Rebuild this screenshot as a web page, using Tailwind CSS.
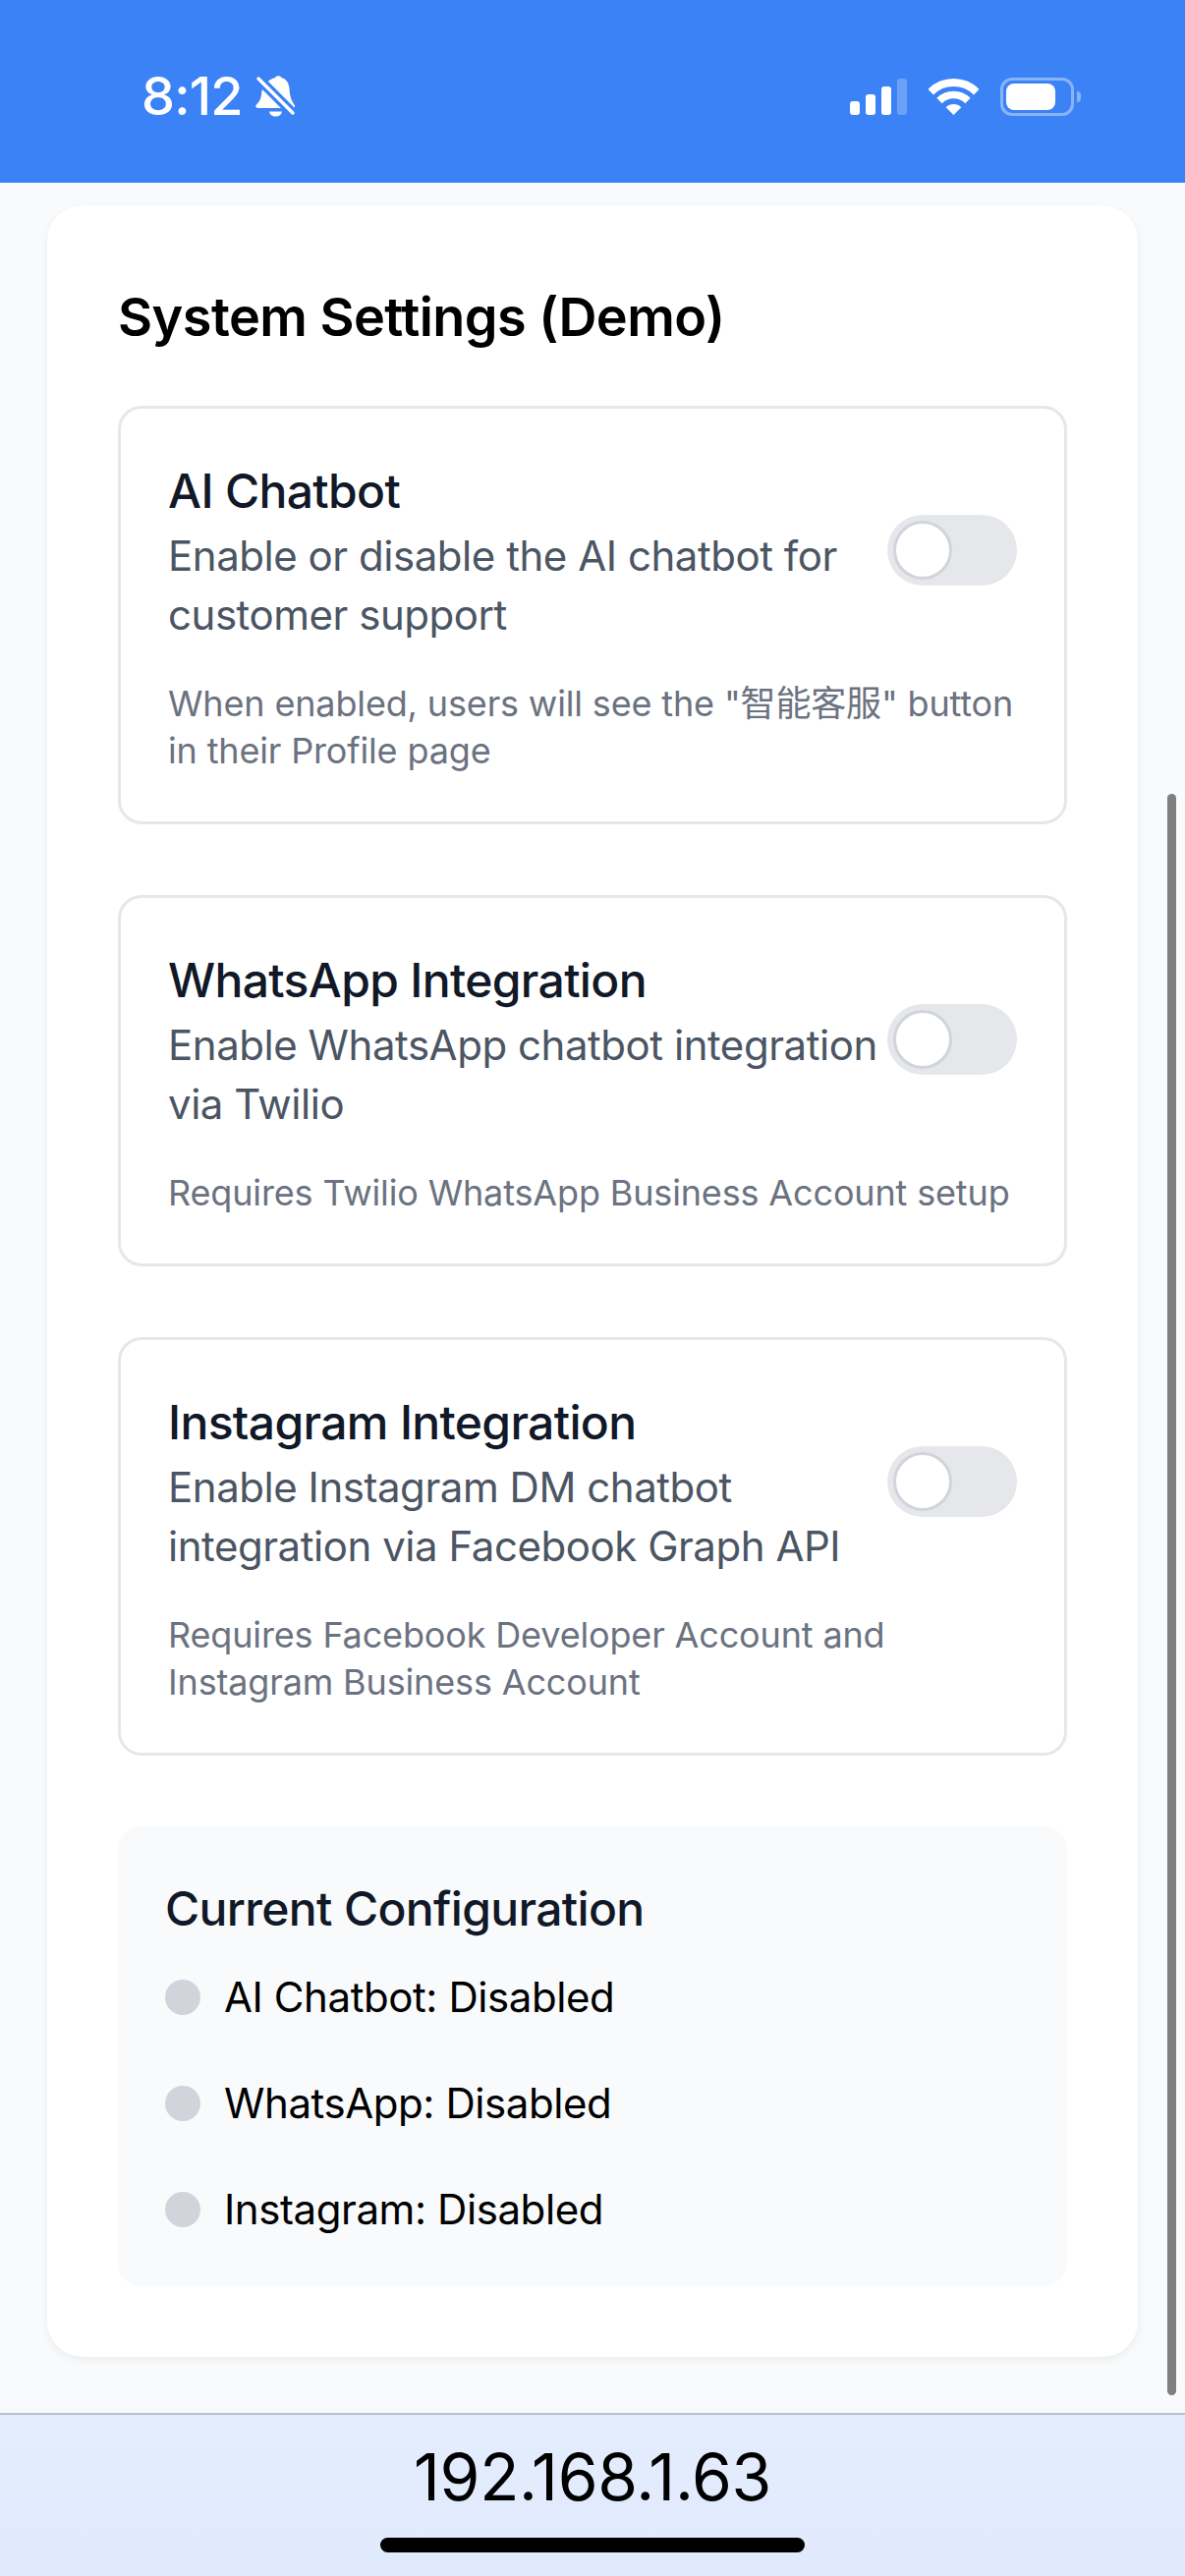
<!DOCTYPE html>
<html lang="en">
<head>
    <meta charset="UTF-8">
    <meta name="viewport" content="width=device-width, initial-scale=1.0">
    <title>System Settings (Demo)</title>
    <script src="https://cdn.jsdelivr.net/npm/@tailwindcss/browser@4"></script>
</head>
<body class="bg-[#f9fafb] font-['Inter','Noto_Sans_CJK_SC',sans-serif]">
    <div class="relative flex flex-col w-[1206px] h-[2622px] overflow-hidden">
        <!-- Status bar -->
        <header class="h-[186px] shrink-0 bg-[#3b82f6] text-white flex items-start pt-[78px] pl-[144px] pr-[106px]">
            <div class="flex items-center h-[40px]">
                <span class="text-[54px] leading-[40px] font-medium tracking-[-0.8px]">8:12</span>
                <svg class="ml-[13px]" width="41" height="42" viewBox="0 0 41 42">
                    <path fill="#fff" d="M20 2c1.500-2.500 5-2.500 6.500 0 5 1.500 7.500 5.500 8 11 .3 6 1.500 12 5 16.500 1 2 .5 3.500-2 3.500H3c-2.500 0-3.500-2-2-3.500 3-3 4.500-6 5-10C6.500 11 12 4 20 2z"/>
                    <path fill="#fff" d="M14 36.500h13c-.5 3-3 5-6.500 5s-6-2-6.500-5z"/>
                    <path stroke="#3b82f6" stroke-width="10" d="M-1 -1L42 42"/>
                    <path stroke="#fff" stroke-width="3.500" stroke-linecap="round" d="M3 3L38 38"/>
                </svg>
            </div>
            <div class="ml-auto flex items-center h-[40px]">
                <div class="flex items-end gap-[6px] h-[37px]">
                    <div class="w-[10px] h-[14px] rounded-[3px] bg-white"></div>
                    <div class="w-[10px] h-[21px] rounded-[3px] bg-white"></div>
                    <div class="w-[10px] h-[29px] rounded-[3px] bg-white"></div>
                    <div class="w-[10px] h-[37px] rounded-[3px] bg-white/25"></div>
                </div>
                <svg class="ml-[22px]" width="51" height="37" viewBox="0 0 51 37" fill="none">
                    <path stroke="#fff" stroke-width="8" d="M2.200 13.700A33 33 0 0 1 48.800 13.700"/>
                    <path stroke="#fff" stroke-width="7.500" d="M11 22.500A20.500 20.500 0 0 1 40 22.500"/>
                    <path fill="#fff" d="M25.500 37L17.700 29.200A11 11 0 0 1 33.300 29.200Z"/>
                </svg>
                <div class="ml-[22px] w-[75px] h-[39px] rounded-[12px] border-[3px] border-white/40 p-[3px]">
                    <div class="w-[50px] h-full rounded-[8px] bg-white"></div>
                </div>
                <div class="ml-[3px] w-[4px] h-[11px] rounded-r-full bg-white/40"></div>
            </div>
        </header>

        <!-- Page content -->
        <main class="flex-1 px-[48px] pt-[23px]">
            <div class="bg-white rounded-[36px] shadow-[0_3px_9px_rgba(0,0,0,0.06)] p-[72px]">
                <h1 class="text-[54px] leading-[84px] font-semibold text-black tracking-[-0.55px] mb-[48px]">System Settings (Demo)</h1>

                <!-- AI Chatbot -->
                <section class="border-[3px] border-[#e5e7eb] rounded-[24px] p-[48px] mb-[72px]">
                    <div class="flex items-center justify-between">
                        <div class="flex-1">
                            <h2 class="text-[48px] leading-[72px] font-[450] tracking-[-0.65px] text-[#111827]">AI Chatbot</h2>
                            <p class="text-[42px] leading-[60px] tracking-[-0.46px] text-[#4b5563]">Enable or disable the AI chatbot for customer support</p>
                        </div>
                        <div class="w-[132px] h-[72px] shrink-0 rounded-full bg-[#e5e7eb] flex items-center px-[6px]">
                            <div class="w-[60px] h-[60px] rounded-full bg-white border-[3px] border-[#d1d5db]"></div>
                        </div>
                    </div>
                    <p class="mt-[36px] text-[36px] leading-[48px] tracking-[-0.15px] text-[#6b7280]">When enabled, users will see the "智能客服" button in their Profile page</p>
                </section>

                <!-- WhatsApp -->
                <section class="border-[3px] border-[#e5e7eb] rounded-[24px] p-[48px] mb-[72px]">
                    <div class="flex items-center justify-between">
                        <div class="flex-1">
                            <h2 class="text-[48px] leading-[72px] font-[450] tracking-[-0.65px] text-[#111827]">WhatsApp Integration</h2>
                            <p class="text-[42px] leading-[60px] tracking-[-0.46px] text-[#4b5563]">Enable WhatsApp chatbot integration via Twilio</p>
                        </div>
                        <div class="w-[132px] h-[72px] shrink-0 rounded-full bg-[#e5e7eb] flex items-center px-[6px]">
                            <div class="w-[60px] h-[60px] rounded-full bg-white border-[3px] border-[#d1d5db]"></div>
                        </div>
                    </div>
                    <p class="mt-[36px] text-[36px] leading-[48px] tracking-[-0.15px] text-[#6b7280]">Requires Twilio WhatsApp Business Account setup</p>
                </section>

                <!-- Instagram -->
                <section class="border-[3px] border-[#e5e7eb] rounded-[24px] p-[48px] mb-[72px]">
                    <div class="flex items-center justify-between">
                        <div class="flex-1">
                            <h2 class="text-[48px] leading-[72px] font-[450] tracking-[-0.65px] text-[#111827]">Instagram Integration</h2>
                            <p class="text-[42px] leading-[60px] tracking-[-0.46px] text-[#4b5563]">Enable Instagram DM chatbot integration via Facebook Graph API</p>
                        </div>
                        <div class="w-[132px] h-[72px] shrink-0 rounded-full bg-[#e5e7eb] flex items-center px-[6px]">
                            <div class="w-[60px] h-[60px] rounded-full bg-white border-[3px] border-[#d1d5db]"></div>
                        </div>
                    </div>
                    <p class="mt-[36px] pr-[100px] text-[36px] leading-[48px] tracking-[-0.15px] text-[#6b7280]">Requires Facebook Developer Account and Instagram Business Account</p>
                </section>

                <!-- Current config -->
                <section class="bg-[#f9fafb] rounded-[24px] p-[48px]">
                    <h3 class="text-[48px] leading-[72px] font-[450] tracking-[-0.65px] text-[#111827] mb-[24px]">Current Configuration</h3>
                    <div class="flex flex-col gap-[48px]">
                        <div class="flex items-center gap-[24px]">
                            <div class="w-[36px] h-[36px] rounded-full bg-[#d1d5db]"></div>
                            <span class="text-[42px] leading-[60px] tracking-[-0.42px] text-black">AI Chatbot: Disabled</span>
                        </div>
                        <div class="flex items-center gap-[24px]">
                            <div class="w-[36px] h-[36px] rounded-full bg-[#d1d5db]"></div>
                            <span class="text-[42px] leading-[60px] tracking-[-0.42px] text-black">WhatsApp: Disabled</span>
                        </div>
                        <div class="flex items-center gap-[24px]">
                            <div class="w-[36px] h-[36px] rounded-full bg-[#d1d5db]"></div>
                            <span class="text-[42px] leading-[60px] tracking-[-0.42px] text-black">Instagram: Disabled</span>
                        </div>
                    </div>
                </section>
            </div>
        </main>

        <!-- Browser address bar -->
        <footer class="h-[166px] shrink-0 border-t-[2px] border-[#b8c0d2] bg-gradient-to-b from-[#e4edfd] to-[#e0eafd] flex flex-col items-center">
            <div class="mt-[23px] text-[66px] leading-[80px] tracking-[-0.3px] text-black">192.168.1.63</div>
            <div class="mt-[22px] w-[432px] h-[15px] rounded-full bg-black"></div>
        </footer>

        <!-- Scrollbar overlay -->
        <div class="absolute left-[1188px] top-[808px] w-[9px] h-[1630px] rounded-full bg-[#7f7f7f]"></div>
    </div>
</body>
</html>
